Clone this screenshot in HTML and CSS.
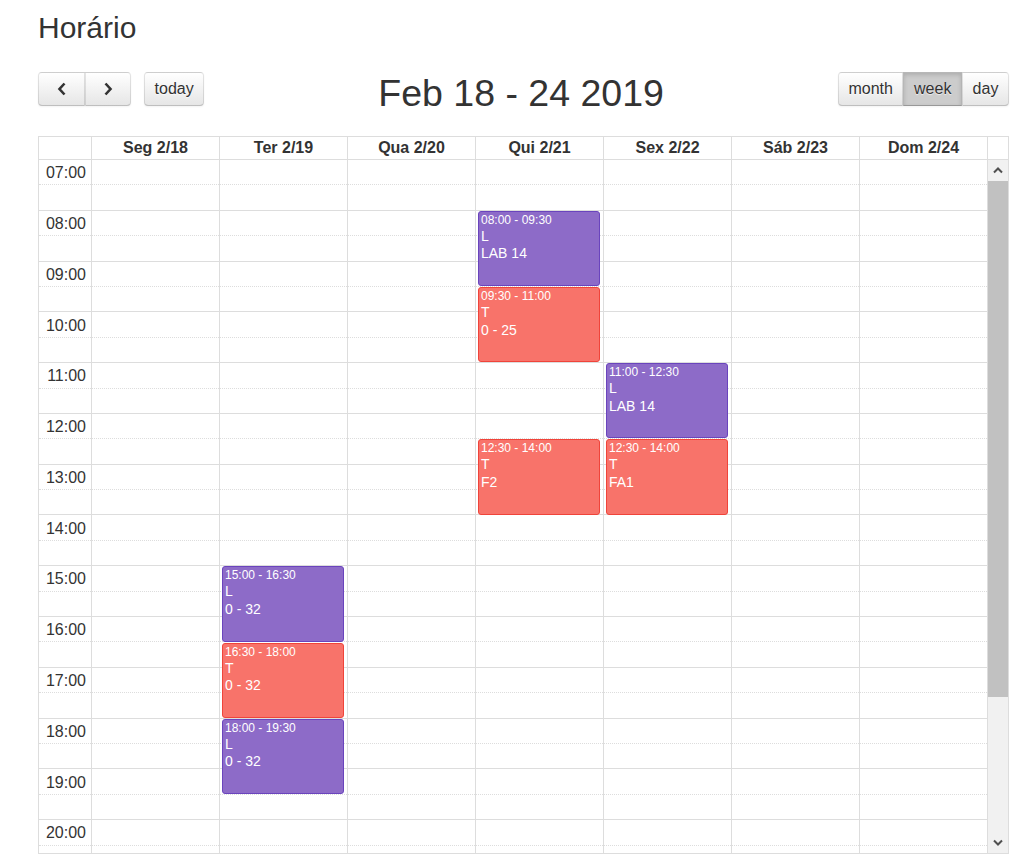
FILE: index.html
```html
<!DOCTYPE html>
<html lang="pt">
<head>
<meta charset="utf-8">
<title>Horário</title>
<link rel="stylesheet" href="styles.css">
</head>
<body>
<div class="page">
  <h1 class="page-title">Horário</h1>

  <div class="toolbar">
    <div class="tb-left">
      <div class="btn-group">
        <button class="btn btn-prev"><svg width="10" height="14" viewBox="0 0 10 14"><polyline points="7.5,1.5 2.5,7 7.5,12.5" fill="none" stroke="#333" stroke-width="2.6" stroke-linejoin="miter"/></svg></button>
        <button class="btn btn-next"><svg width="10" height="14" viewBox="0 0 10 14"><polyline points="2.5,1.5 7.5,7 2.5,12.5" fill="none" stroke="#333" stroke-width="2.6" stroke-linejoin="miter"/></svg></button>
      </div>
      <button class="btn btn-today">today</button>
    </div>
    <h2 class="range">Feb 18 - 24 2019</h2>
    <div class="btn-group">
      <button class="btn">month</button>
      <button class="btn is-active">week</button>
      <button class="btn">day</button>
    </div>
  </div>

  <div class="cal">
    <div class="cal-head">
      <div class="hc hc-axis"></div>
      <div class="hc hc-day">Seg 2/18</div>
      <div class="hc hc-day">Ter 2/19</div>
      <div class="hc hc-day">Qua 2/20</div>
      <div class="hc hc-day">Qui 2/21</div>
      <div class="hc hc-day">Sex 2/22</div>
      <div class="hc hc-day">Sáb 2/23</div>
      <div class="hc hc-day">Dom 2/24</div>
      <div class="hc hc-gutter"></div>
    </div>

    <div class="cal-body">
      <div class="tg">
        <div class="slats">
          <div class="slat slat-hour"><div class="axis">07:00</div></div>
          <div class="slat slat-half"><div class="axis"></div></div>
          <div class="slat slat-hour"><div class="axis">08:00</div></div>
          <div class="slat slat-half"><div class="axis"></div></div>
          <div class="slat slat-hour"><div class="axis">09:00</div></div>
          <div class="slat slat-half"><div class="axis"></div></div>
          <div class="slat slat-hour"><div class="axis">10:00</div></div>
          <div class="slat slat-half"><div class="axis"></div></div>
          <div class="slat slat-hour"><div class="axis">11:00</div></div>
          <div class="slat slat-half"><div class="axis"></div></div>
          <div class="slat slat-hour"><div class="axis">12:00</div></div>
          <div class="slat slat-half"><div class="axis"></div></div>
          <div class="slat slat-hour"><div class="axis">13:00</div></div>
          <div class="slat slat-half"><div class="axis"></div></div>
          <div class="slat slat-hour"><div class="axis">14:00</div></div>
          <div class="slat slat-half"><div class="axis"></div></div>
          <div class="slat slat-hour"><div class="axis">15:00</div></div>
          <div class="slat slat-half"><div class="axis"></div></div>
          <div class="slat slat-hour"><div class="axis">16:00</div></div>
          <div class="slat slat-half"><div class="axis"></div></div>
          <div class="slat slat-hour"><div class="axis">17:00</div></div>
          <div class="slat slat-half"><div class="axis"></div></div>
          <div class="slat slat-hour"><div class="axis">18:00</div></div>
          <div class="slat slat-half"><div class="axis"></div></div>
          <div class="slat slat-hour"><div class="axis">19:00</div></div>
          <div class="slat slat-half"><div class="axis"></div></div>
          <div class="slat slat-hour"><div class="axis">20:00</div></div>
          <div class="slat slat-half"><div class="axis"></div></div>
        </div>

        <div class="cols">
          <div class="col"></div>
          <div class="col">
            <div class="ev ev-lab" style="top:406.4px;height:75.2px">
              <div class="ev-time">15:00 - 16:30</div>
              <div class="ev-title">L<br>0 - 32</div>
            </div>
            <div class="ev ev-theory" style="top:482.6px;height:75.2px">
              <div class="ev-time">16:30 - 18:00</div>
              <div class="ev-title">T<br>0 - 32</div>
            </div>
            <div class="ev ev-lab" style="top:558.8px;height:75.2px">
              <div class="ev-time">18:00 - 19:30</div>
              <div class="ev-title">L<br>0 - 32</div>
            </div>
          </div>
          <div class="col"></div>
          <div class="col">
            <div class="ev ev-lab" style="top:50.8px;height:75.2px">
              <div class="ev-time">08:00 - 09:30</div>
              <div class="ev-title">L<br>LAB 14</div>
            </div>
            <div class="ev ev-theory" style="top:127px;height:75.2px">
              <div class="ev-time">09:30 - 11:00</div>
              <div class="ev-title">T<br>0 - 25</div>
            </div>
            <div class="ev ev-theory" style="top:279.4px;height:75.2px">
              <div class="ev-time">12:30 - 14:00</div>
              <div class="ev-title">T<br>F2</div>
            </div>
          </div>
          <div class="col">
            <div class="ev ev-lab" style="top:203.2px;height:75.2px">
              <div class="ev-time">11:00 - 12:30</div>
              <div class="ev-title">L<br>LAB 14</div>
            </div>
            <div class="ev ev-theory" style="top:279.4px;height:75.2px">
              <div class="ev-time">12:30 - 14:00</div>
              <div class="ev-title">T<br>FA1</div>
            </div>
          </div>
          <div class="col"></div>
          <div class="col"></div>
        </div>
      </div>

      <div class="sbar">
        <div class="sb-btn"><svg width="10" height="7" viewBox="0 0 10 7"><polyline points="1,5.5 5,1.5 9,5.5" fill="none" stroke="#505050" stroke-width="2"/></svg></div>
        <div class="sb-track"><div class="sb-thumb"></div></div>
        <div class="sb-btn"><svg width="10" height="7" viewBox="0 0 10 7"><polyline points="1,1.5 5,5.5 9,1.5" fill="none" stroke="#505050" stroke-width="2"/></svg></div>
      </div>
    </div>
  </div>
</div>
</body>
</html>
```

FILE: styles.css
```css
* { box-sizing: border-box; }

html, body {
  margin: 0;
  padding: 0;
  background: #fff;
}

body {
  font-family: "Liberation Sans", Arial, Helvetica, sans-serif;
  font-size: 16px;
  color: #333;
  overflow: hidden;
}

.page {
  padding: 0 15px 0 38px;
}

.page-title {
  margin: 12px 0 0;
  font-size: 30px;
  line-height: 32px;
  font-weight: normal;
  color: #333;
}

/* toolbar */
.toolbar {
  display: flex;
  align-items: flex-start;
  height: 40px;
  margin: 28px 0 24px;
}

.tb-left {
  display: flex;
}

.range {
  flex: 1;
  margin: 0;
  padding-top: 1px;
  text-align: center;
  font-size: 37.5px;
  line-height: 40px;
  font-weight: normal;
  color: #333;
}

.btn-group {
  display: flex;
}

.btn {
  display: flex;
  align-items: center;
  justify-content: center;
  height: 34px;
  margin: 0;
  padding: 0 9.6px;
  font-family: "Liberation Sans", Arial, Helvetica, sans-serif;
  font-size: 16px;
  color: #333;
  border: 1px solid;
  border-color: rgba(0, 0, 0, 0.1) rgba(0, 0, 0, 0.1) rgba(0, 0, 0, 0.25);
  border-radius: 0;
  background: linear-gradient(#fff, #e6e6e6);
  box-shadow: inset 0 1px 0 rgba(255, 255, 255, 0.2), 0 1px 2px rgba(0, 0, 0, 0.05);
  text-shadow: 0 1px 1px rgba(255, 255, 255, 0.75);
  cursor: pointer;
}

.btn-group .btn:first-child {
  border-top-left-radius: 4px;
  border-bottom-left-radius: 4px;
}

.btn-group .btn:last-child {
  border-top-right-radius: 4px;
  border-bottom-right-radius: 4px;
}

.btn-prev { width: 47px; }
.btn-next { width: 46px; }

.btn-today {
  margin-left: 13px;
  border-radius: 4px;
}

.btn.is-active {
  background: #ccc;
  box-shadow: inset 0 2px 4px rgba(0, 0, 0, 0.15), 0 1px 2px rgba(0, 0, 0, 0.05);
}

/* calendar */
.cal {
  border: 1px solid #ddd;
}

.cal-head {
  display: flex;
  border-bottom: 1px solid #ddd;
}

.hc {
  height: 22px;
  display: flex;
  align-items: center;
  justify-content: center;
  font-weight: bold;
  font-size: 16px;
  color: #333;
}

.hc-axis { width: 52px; }

.hc-day {
  width: 128px;
  border-left: 1px solid #ddd;
}

.hc-gutter {
  flex: 1;
  border-left: 1px solid #ddd;
}

.cal-body {
  display: flex;
  height: 693px;
  overflow: hidden;
}

.tg {
  position: relative;
  width: 949px;
  border-right: 1px solid #ddd;
}

.slat {
  display: flex;
  height: 25.4px;
  border-bottom: 1px solid #ddd;
}

.slat-hour {
  border-bottom-style: dotted;
}

.axis {
  width: 52px;
  display: flex;
  align-items: center;
  justify-content: flex-end;
  padding-top: 2px;
  padding-right: 5px;
  font-size: 16px;
  color: #333;
  white-space: nowrap;
}

.cols {
  position: absolute;
  top: 0;
  bottom: 0;
  left: 52px;
  display: flex;
}

.col {
  position: relative;
  width: 128px;
  border-left: 1px solid #ddd;
}

.ev {
  position: absolute;
  left: 2px;
  right: 3px;
  border: 1px solid;
  border-radius: 3px;
  padding: 1px 2px 0;
  color: #fff;
  overflow: hidden;
}

.ev-lab {
  background: #8d6bc8;
  border-color: #6a44bd;
}

.ev-theory {
  background: #f8736a;
  border-color: #f0443a;
}

.ev-time {
  font-size: 12px;
  line-height: 15px;
  white-space: nowrap;
}

.ev-title {
  font-size: 14px;
  line-height: 17.6px;
}

/* scrollbar */
.sbar {
  flex: 1;
  display: flex;
  flex-direction: column;
  background: #f1f1f1;
}

.sb-btn {
  height: 21px;
  display: flex;
  align-items: center;
  justify-content: center;
}

.sb-track {
  flex: 1;
}

.sb-thumb {
  height: 516px;
  background: #c1c1c1;
}
```
